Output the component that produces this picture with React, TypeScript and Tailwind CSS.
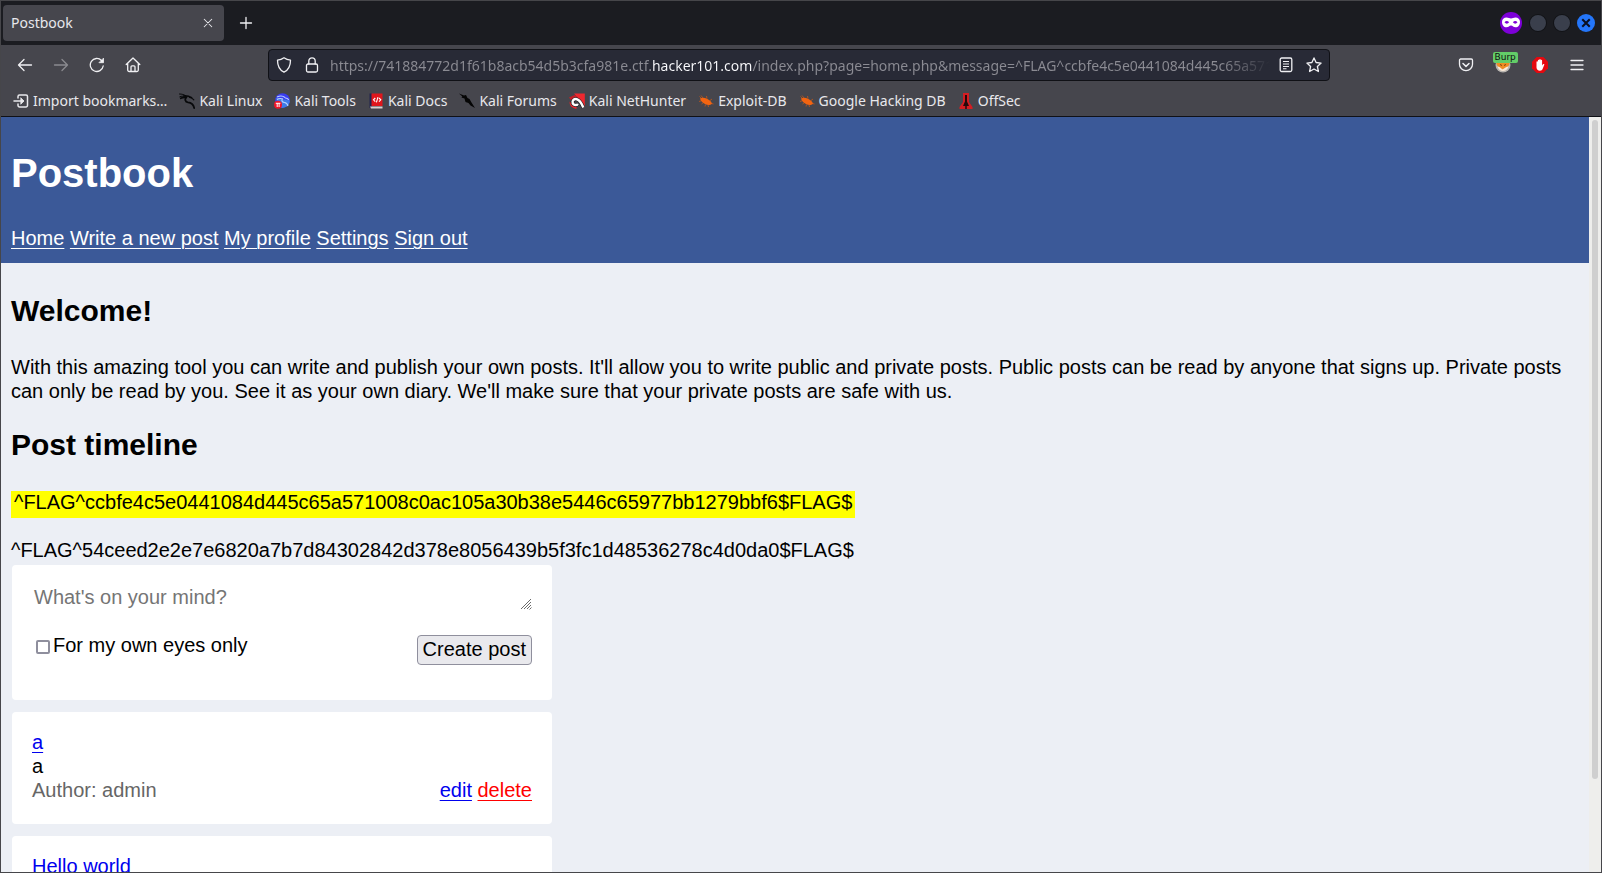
import type { ReactNode } from "react";

const chromeFont = "font-['Noto_Sans',sans-serif]";
const pageFont = "font-['Liberation_Sans',Arial,sans-serif]";

function Line({ children, className = "size-4" }: { children: ReactNode; className?: string }) {
  return (
    <svg
      viewBox="0 0 16 16"
      className={className}
      fill="none"
      stroke="currentColor"
      strokeWidth="1.3"
      strokeLinecap="round"
      strokeLinejoin="round"
      aria-hidden="true"
    >
      {children}
    </svg>
  );
}

function ToolButton({ label, children, wide = false, disabled = false }: { label: string; children: ReactNode; wide?: boolean; disabled?: boolean }) {
  return (
    <button
      type="button"
      aria-label={label}
      disabled={disabled}
      className={`${wide ? "w-[37px]" : "w-9"} flex h-8 shrink-0 items-center justify-center text-[#f0f0f3] disabled:opacity-40`}
    >
      {children}
    </button>
  );
}

function ImportIcon() {
  return (
    <Line>
      <path d="M5 5V3.5A1.5 1.5 0 0 1 6.500 2H13a1.500 1.500 0 0 1 1.500 1.500v9A1.500 1.500 0 0 1 13 14H6.500A1.500 1.500 0 0 1 5 12.500V11M1 8h9" strokeWidth="1.5" />
      <path d="M8 5l3 3-3 3z" fill="currentColor" strokeWidth="0.8" />
    </Line>
  );
}

function DragonIcon() {
  return (
    <svg viewBox="0 0 16 16" className="size-4" fill="none" stroke="#08090b" strokeLinecap="round" aria-hidden="true">
      <path d="M.5 1c2.500 0 4.500.6 6 1.600M.8 3.800c2-.9 4-.8 5.700-.3" strokeWidth="1" />
      <path d="M1.800 5.300c2-1 3.600-1 5-.8M5 2.800c3-.3 5 .2 7.500 1.800" strokeWidth="1.700" />
      <path d="M7.500 4C5.500 6 6 9 9 9.300c3 .2 5.400 1.600 6.200 5.700" strokeWidth="1.800" />
      <path d="M10.500 4.500c1.800 0 3 .6 4.300 2.300" strokeWidth="1.200" />
    </svg>
  );
}

function ToolsIcon() {
  return (
    <svg viewBox="0 0 16 16" className="size-4" aria-hidden="true">
      <circle cx="8.500" cy="7.500" r="7.300" fill="#3a3df2" />
      <path d="M15.800 7.500a7.300 7.300 0 0 1-11 6.300L2 5z" fill="#3f7be8" />
      <path d="M3 4c3-1.500 6-1.200 8 .5M3 6.500c2.500-1.500 4.500-1 6-.5M8.500 5.500c-1.500 2.500 0 3.800 2 4 2 .2 3 1.500 3.500 3.500M11 5c1.500-.2 2.800.5 3.800 1.800" fill="none" stroke="#b9d2ff" strokeWidth="1.100" />
      <circle cx="4" cy="11.800" r="4" fill="#f01428" />
      <path d="M1.800 10.300h4.600M3.200 10.300V14M5.100 10.300V14" stroke="#fff" strokeWidth="1" />
    </svg>
  );
}

function DocsIcon() {
  return (
    <svg viewBox="0 0 16 16" className="size-4" aria-hidden="true">
      <path d="M1.500.5H4V15H1.500z" fill="#23244f" />
      <path d="M3.500.5h11V13h-11z" fill="#e0161c" />
      <path d="M2 13.500h12.500v2H3z" fill="#d9cfd0" />
      <path d="M7.300 5L5.500 6.800l1.800 1.800M11 5l1.800 1.800L11 8.600M10 4.200L8.400 9.400" fill="none" stroke="#fff" strokeWidth="1.100" />
    </svg>
  );
}

function ForumsIcon() {
  return (
    <svg viewBox="0 0 16 16" className="size-4" aria-hidden="true">
      <path d="M0 .5l5 2 2-.5 1.500 3 2 1 2 3.500 3.500 5.500-4.500-2.500-2-2.500-3-1-1-3.500L2.500 4.500l.8-1z" fill="#050505" />
    </svg>
  );
}

function NetHunterIcon() {
  return (
    <svg viewBox="0 0 16 16" className="size-4" aria-hidden="true">
      <path d="M5 .5h10.800V13.500z" fill="#f0282f" />
      <path d="M0 4.500L5.500 2l3 2-5 5z" fill="#c41f27" />
      <path d="M1.500 9c-.5 3 2 5.500 6 6" fill="none" stroke="#e9242b" strokeWidth="1.800" />
      <path d="M14.300 14.500c-1.600-4-3.600-7.600-6.500-8.300C5 5.600 2.600 8 3.700 10.400c1 1.900 3.800 2.300 5.300.6" fill="none" stroke="#16161a" strokeWidth="3.600" />
      <path d="M14.300 14.500c-1.600-4-3.600-7.600-6.500-8.300C5 5.600 2.600 8 3.700 10.400c1 1.900 3.800 2.300 5.300.6" fill="none" stroke="#fff" strokeWidth="2.500" />
    </svg>
  );
}

function BugIcon() {
  return (
    <svg viewBox="0 0 16 16" className="size-4" aria-hidden="true">
      <path d="M1 8.500l3-1M3.500 11l2-1.500M7 13.500l.5-2M10.500 14l-.5-2M5 5L3 2.500M9 5.500L8.500 3M12 7.500l2-1.500M13.500 10.500l2 .5M1.500 3.500l2 2" stroke="#b8561d" strokeWidth="0.900" />
      <path d="M2 5.500c2-1.300 4.500-1 7 .3 2.300 1.200 4.300 2.500 5 4.900-1.800 1.700-4.400 1.600-7 .3C4.700 9.800 2.700 8 2 5.500z" fill="#f26411" />
    </svg>
  );
}

function OffSecIcon() {
  return (
    <svg viewBox="0 0 16 16" className="size-4" aria-hidden="true">
      <path d="M5 0h6v9l3.500 5v2h-13v-2L5 9z" fill="#d31d22" />
      <path d="M7 2h2v6.500l2 4.500H5l2-4.500z" fill="#25090b" />
      <path d="M8 13v3" stroke="#25090b" strokeWidth="1.500" />
    </svg>
  );
}

const bookmarks = [
  { label: "Import bookmarks…", icon: <ImportIcon /> },
  { label: "Kali Linux", icon: <DragonIcon /> },
  { label: "Kali Tools", icon: <ToolsIcon /> },
  { label: "Kali Docs", icon: <DocsIcon /> },
  { label: "Kali Forums", icon: <ForumsIcon /> },
  { label: "Kali NetHunter", icon: <NetHunterIcon /> },
  { label: "Exploit-DB", icon: <BugIcon /> },
  { label: "Google Hacking DB", icon: <BugIcon /> },
  { label: "OffSec", icon: <OffSecIcon /> },
];

function TabStrip() {
  return (
    <div className="flex h-[44px] shrink-0 items-center bg-[#1b1c21] pl-0.5 pr-1.5">
      <div className="flex h-9 w-[221px] items-center justify-between rounded bg-[#46464d] pl-2 pr-2.5">
        <span className="text-sm text-[#e8e8ec]">Postbook</span>
        <button type="button" aria-label="Close tab" className="text-[#e8e8ec]">
          <Line className="size-3">
            <path d="M3 3l10 10M13 3L3 13" strokeWidth="1.4" />
          </Line>
        </button>
      </div>
      <button type="button" aria-label="New tab" className="ml-3.5 text-[#f0f0f3]">
        <Line>
          <path d="M8 2.500v11M2.500 8h11" />
        </Line>
      </button>
      <div className="ml-auto flex items-center gap-1.5">
        <svg viewBox="0 0 24 24" className="size-6" role="img" aria-label="Private browsing">
          <circle cx="12" cy="12" r="11" fill="#7d00d8" />
          <path
            fillRule="evenodd"
            d="M3 11c0-3 2-4.500 4.500-4.500 2 0 3 1 4.500 1s2.500-1 4.500-1C19 6.500 21 8 21 11s-1.800 5.300-4.500 5.300c-2.200 0-2.800-1.800-4.500-1.800s-2.300 1.800-4.500 1.800C4.800 16.300 3 14 3 11zm2.500.3c1.300 1.800 3.300 1.800 4.600 0-1.300-1.900-3.300-1.900-4.600 0zm8.400 0c1.300 1.800 3.300 1.800 4.600 0-1.300-1.900-3.300-1.900-4.600 0z"
            fill="#fff"
          />
        </svg>
        <button type="button" aria-label="Minimize" className="size-[18px] rounded-full border border-black/70 bg-[#3a3f4c]" />
        <button type="button" aria-label="Maximize" className="size-[18px] rounded-full border border-black/70 bg-[#3a3f4c]" />
        <button type="button" aria-label="Close window" className="flex size-[18px] items-center justify-center rounded-full bg-[#2476fa] text-[#0b1020]">
          <Line className="size-3">
            <path d="M3 3l10 10M13 3L3 13" strokeWidth="2.800" strokeLinecap="butt" />
          </Line>
        </button>
      </div>
    </div>
  );
}

function NavBar() {
  return (
    <div className="flex h-10 items-center px-1.5">
      <ToolButton label="Back">
        <Line>
          <path d="M14.500 8h-13M7 2.500L1.500 8 7 13.500" />
        </Line>
      </ToolButton>
      <ToolButton label="Forward" disabled>
        <Line>
          <path d="M1.500 8h13M9 2.500L14.500 8 9 13.500" />
        </Line>
      </ToolButton>
      <ToolButton label="Reload">
        <Line>
          <path d="M14.200 9a6.500 6.500 0 1 1-1.700-5.500" />
          <path d="M14.500 1.500v4.200h-4.200z" fill="currentColor" strokeWidth="0.800" />
        </Line>
      </ToolButton>
      <ToolButton label="Home">
        <Line>
          <path d="M1.200 7.500L8 1l6.800 6.500M2.700 6.300V13a1.500 1.500 0 0 0 1.500 1.500h7.600a1.500 1.500 0 0 0 1.500-1.500V6.300M6 14.500V9.800a1 1 0 0 1 1-1h2a1 1 0 0 1 1 1v4.700" />
        </Line>
      </ToolButton>
      <div className="w-[117px] shrink" />
      <div className="flex h-8 min-w-0 flex-1 items-center rounded border border-[#101116] bg-[#282a36] px-[7px] text-[#f0f0f3]">
        <Line>
          <path d="M8 .8c2 1.500 4 2.200 6.500 2.400C14.500 9 12.500 13 8 15.200 3.500 13 1.500 9 1.500 3.200 4 3 6 2.300 8 .8z" />
        </Line>
        <Line className="ml-3 size-4">
          <rect x="2.500" y="7" width="11" height="8" rx="1.500" />
          <path d="M4.800 7V4a3.200 3.200 0 0 1 6.400 0v3" />
        </Line>
        <input
          type="text"
          aria-label="Address"
          defaultValue="https://741884772d1f61b8acb54d5b3cfa981e.ctf.hacker101.com/index.php?page=home.php&message=^FLAG^ccbfe4c5e0441084d445c65a571008c0ac105a30b38e5446c65977bb1279bbf6$FLAG$"
          className="ml-2.5 h-7 min-w-0 flex-1 bg-[linear-gradient(to_right,#8b8b93_322px,#fbfbfe_322px,#fbfbfe_422px,#8b8b93_422px,#8b8b93_calc(100%-48px),transparent)] bg-clip-text text-sm text-transparent outline-none"
        />
        <button type="button" aria-label="Reader view" className="ml-2">
          <Line>
            <rect x="2.200" y="1" width="11.600" height="13.500" rx="1.500" />
            <path d="M5 4.500h6M5 7h6M5 9.500h6M5 11.800h3.500" strokeWidth="1.100" strokeLinecap="butt" />
          </Line>
        </button>
        <button type="button" aria-label="Bookmark this page" className="ml-3">
          <Line>
            <path d="M8 .9l2.100 4.600 5 .6-3.700 3.400 1 5L8 12l-4.400 2.500 1-5L.9 6.100l5-.6z" />
          </Line>
        </button>
      </div>
      <div className="w-[117px] shrink" />
      <ToolButton label="Save to Pocket" wide>
        <Line>
          <path d="M2.700 2h10.600c.7 0 1.200.5 1.200 1.200v4a6.500 6.500 0 0 1-13 0v-4C1.500 2.500 2 2 2.700 2z" />
          <path d="M5 6.500l3 2.900 3-2.900" strokeWidth="1.500" />
        </Line>
      </ToolButton>
      <ToolButton label="FoxyProxy" wide>
        <span className="relative block size-4">
          <svg viewBox="0 0 16 16" className="size-4" aria-hidden="true">
            <circle cx="8" cy="8" r="7.500" fill="#b9b5b0" />
            <path d="M1.500 3l3 2h7l3-2c.7 4-.5 7.500-6.500 9.500C2 10.500.8 7 1.500 3z" fill="#ef8c23" />
            <path d="M2.500 9.500c2 0 3.500 1.500 5 3 2-1.500 4-3 6-3-1 3-3 4.500-5.500 4.500s-4.500-1.500-5.500-4.500z" fill="#fbe9d8" />
            <path d="M5 7.500l2 1M11 7.500L9 8.500" stroke="#7b4310" strokeWidth="1" />
          </svg>
          <span className="absolute -left-0.5 -top-[5px] flex h-[11px] items-center rounded-xs bg-[#63cd68] px-0.5 font-['DejaVu_Sans',sans-serif] text-[9px] leading-none text-[#101010]">
            Burp
          </span>
        </span>
      </ToolButton>
      <ToolButton label="Ad blocker" wide>
        <svg viewBox="0 0 16 16" className="size-4" aria-hidden="true">
          <path d="M4.700 0h6.600L16 4.700v6.600L11.300 16H4.700L0 11.300V4.700z" fill="#e5090f" />
          <path d="M4.500 4.800c0-.9 1.400-.9 1.400 0V3.300c0-.9 1.400-.9 1.400 0v-.6c0-.9 1.400-.9 1.400 0v.8c0-.9 1.400-.9 1.400 0v5l.9-1.300c.6-.6 1.600-.2 1.300.6l-1.500 3.700c-.5 1.500-1.500 2.200-2.900 2.200-2 0-3.400-1.200-3.400-3.200z" fill="#fff" />
        </svg>
      </ToolButton>
      <ToolButton label="Open menu" wide>
        <Line>
          <path d="M2 3.500h12M2 8h12M2 12.500h12" />
        </Line>
      </ToolButton>
    </div>
  );
}

function BookmarksBar() {
  return (
    <nav aria-label="Bookmarks" className="flex h-[31px] items-center gap-3 whitespace-nowrap pl-3 pt-px text-sm text-[#e8e8ec]">
      {bookmarks.map((b) => (
        <a key={b.label} href="#" className="flex items-center gap-1">
          {b.icon}
          {b.label}
        </a>
      ))}
    </nav>
  );
}

function Card({ children }: { children: ReactNode }) {
  return <section className="ml-px w-full max-w-[540px] rounded bg-white px-5 pb-5 pt-[18px]">{children}</section>;
}

function ResizeGrip() {
  return (
    <svg viewBox="0 0 12 12" className="pointer-events-none absolute bottom-0 right-0 size-3 bg-white" fill="none" stroke="#6b6b6b" strokeWidth="1" aria-hidden="true">
      <path d="M1 11L11 1M4 11L11 4M7 11L11 7M9.500 11.500l2-2" />
    </svg>
  );
}

const linkClass = "underline decoration-1 underline-offset-3";

function Page() {
  return (
    <main className={`${pageFont} min-w-0 flex-1 overflow-hidden bg-[#eceff5] text-xl leading-6 text-black`}>
      <header className="bg-[#3b5998] px-2.5 pb-[13px] pt-8 text-white">
        <h1 className="text-[40px] font-bold leading-[48px]">Postbook</h1>
        <nav aria-label="Main" className="mt-[29px]">
          <a href="#" className={linkClass}>Home</a>{" "}
          <a href="#" className={linkClass}>Write a new post</a>{" "}
          <a href="#" className={linkClass}>My profile</a>{" "}
          <a href="#" className={linkClass}>Settings</a>{" "}
          <a href="#" className={linkClass}>Sign out</a>
        </nav>
      </header>
      <div className="px-2.5 pt-[30px]">
        <h2 className="text-3xl font-bold leading-9">Welcome!</h2>
        <p className="mt-[26px]">
          With this amazing tool you can write and publish your own posts. It'll allow you to write public and private posts. Public posts can be
          read by anyone that signs up. Private posts can only be read by you. See it as your own diary. We'll make sure that your private posts
          are safe with us.
        </p>
        <h2 className="mt-6 text-3xl font-bold leading-9">Post timeline</h2>
        <p className="mt-7 w-fit bg-[#ffff00] px-[3px] pb-[5px] leading-[22px]">^FLAG^ccbfe4c5e0441084d445c65a571008c0ac105a30b38e5446c65977bb1279bbf6$FLAG$</p>
        <p className="mt-5">^FLAG^54ceed2e2e7e6820a7b7d84302842d378e8056439b5f3fc1d48536278c4d0da0$FLAG$</p>
        <div className="mt-[3px] flex flex-col gap-3">
          <Card>
            <form className="h-[97px]">
              <div className="relative">
                <textarea
                  rows={1}
                  aria-label="Post"
                  placeholder="What's on your mind?"
                  className="block h-[27px] w-full resize-none px-0.5 pt-0.5 outline-none placeholder:text-[#757575]"
                />
                <ResizeGrip />
              </div>
              <div className="mt-[23px] flex items-start justify-between">
                <label className="flex items-center gap-[3px]">
                  <input type="checkbox" className="ml-1 mt-1 size-3.5 appearance-none rounded-xs border-2 border-[#8f8f9d] bg-white" />
                  For my own eyes only
                </label>
                <button type="button" className="mt-0.5 h-[30px] rounded border border-[#8f8f9d] bg-[#e9e9ed] px-[5px] pb-0.5">
                  Create post
                </button>
              </div>
            </form>
          </Card>
          <Card>
            <a href="#" className={`${linkClass} text-[#0000ee]`}>a</a>
            <p>a</p>
            <div className="flex justify-between pb-0.5">
              <span className="text-[#666666]">Author: admin</span>
              <span>
                <a href="#" className={`${linkClass} text-[#0000ee]`}>edit</a>{" "}
                <a href="#" className={`${linkClass} text-[#ff0000]`}>delete</a>
              </span>
            </div>
          </Card>
          <Card>
            <a href="#" className={`${linkClass} text-[#0000ee]`}>Hello world</a>
            <p className="h-12" />
          </Card>
        </div>
      </div>
    </main>
  );
}

export default function App() {
  return (
    <div className={`${chromeFont} flex h-screen flex-col overflow-hidden border border-[#46464a] bg-[#46464d]`}>
      <TabStrip />
      <div className="shrink-0 border-b border-[#101116]">
        <NavBar />
        <BookmarksBar />
      </div>
      <div className="flex min-h-0 flex-1">
        <Page />
        <div className="w-3 shrink-0 bg-[#eeeeec] p-[3px]">
          <div className="h-[88%] rounded-full bg-[#cfcfcf]" />
        </div>
      </div>
    </div>
  );
}
